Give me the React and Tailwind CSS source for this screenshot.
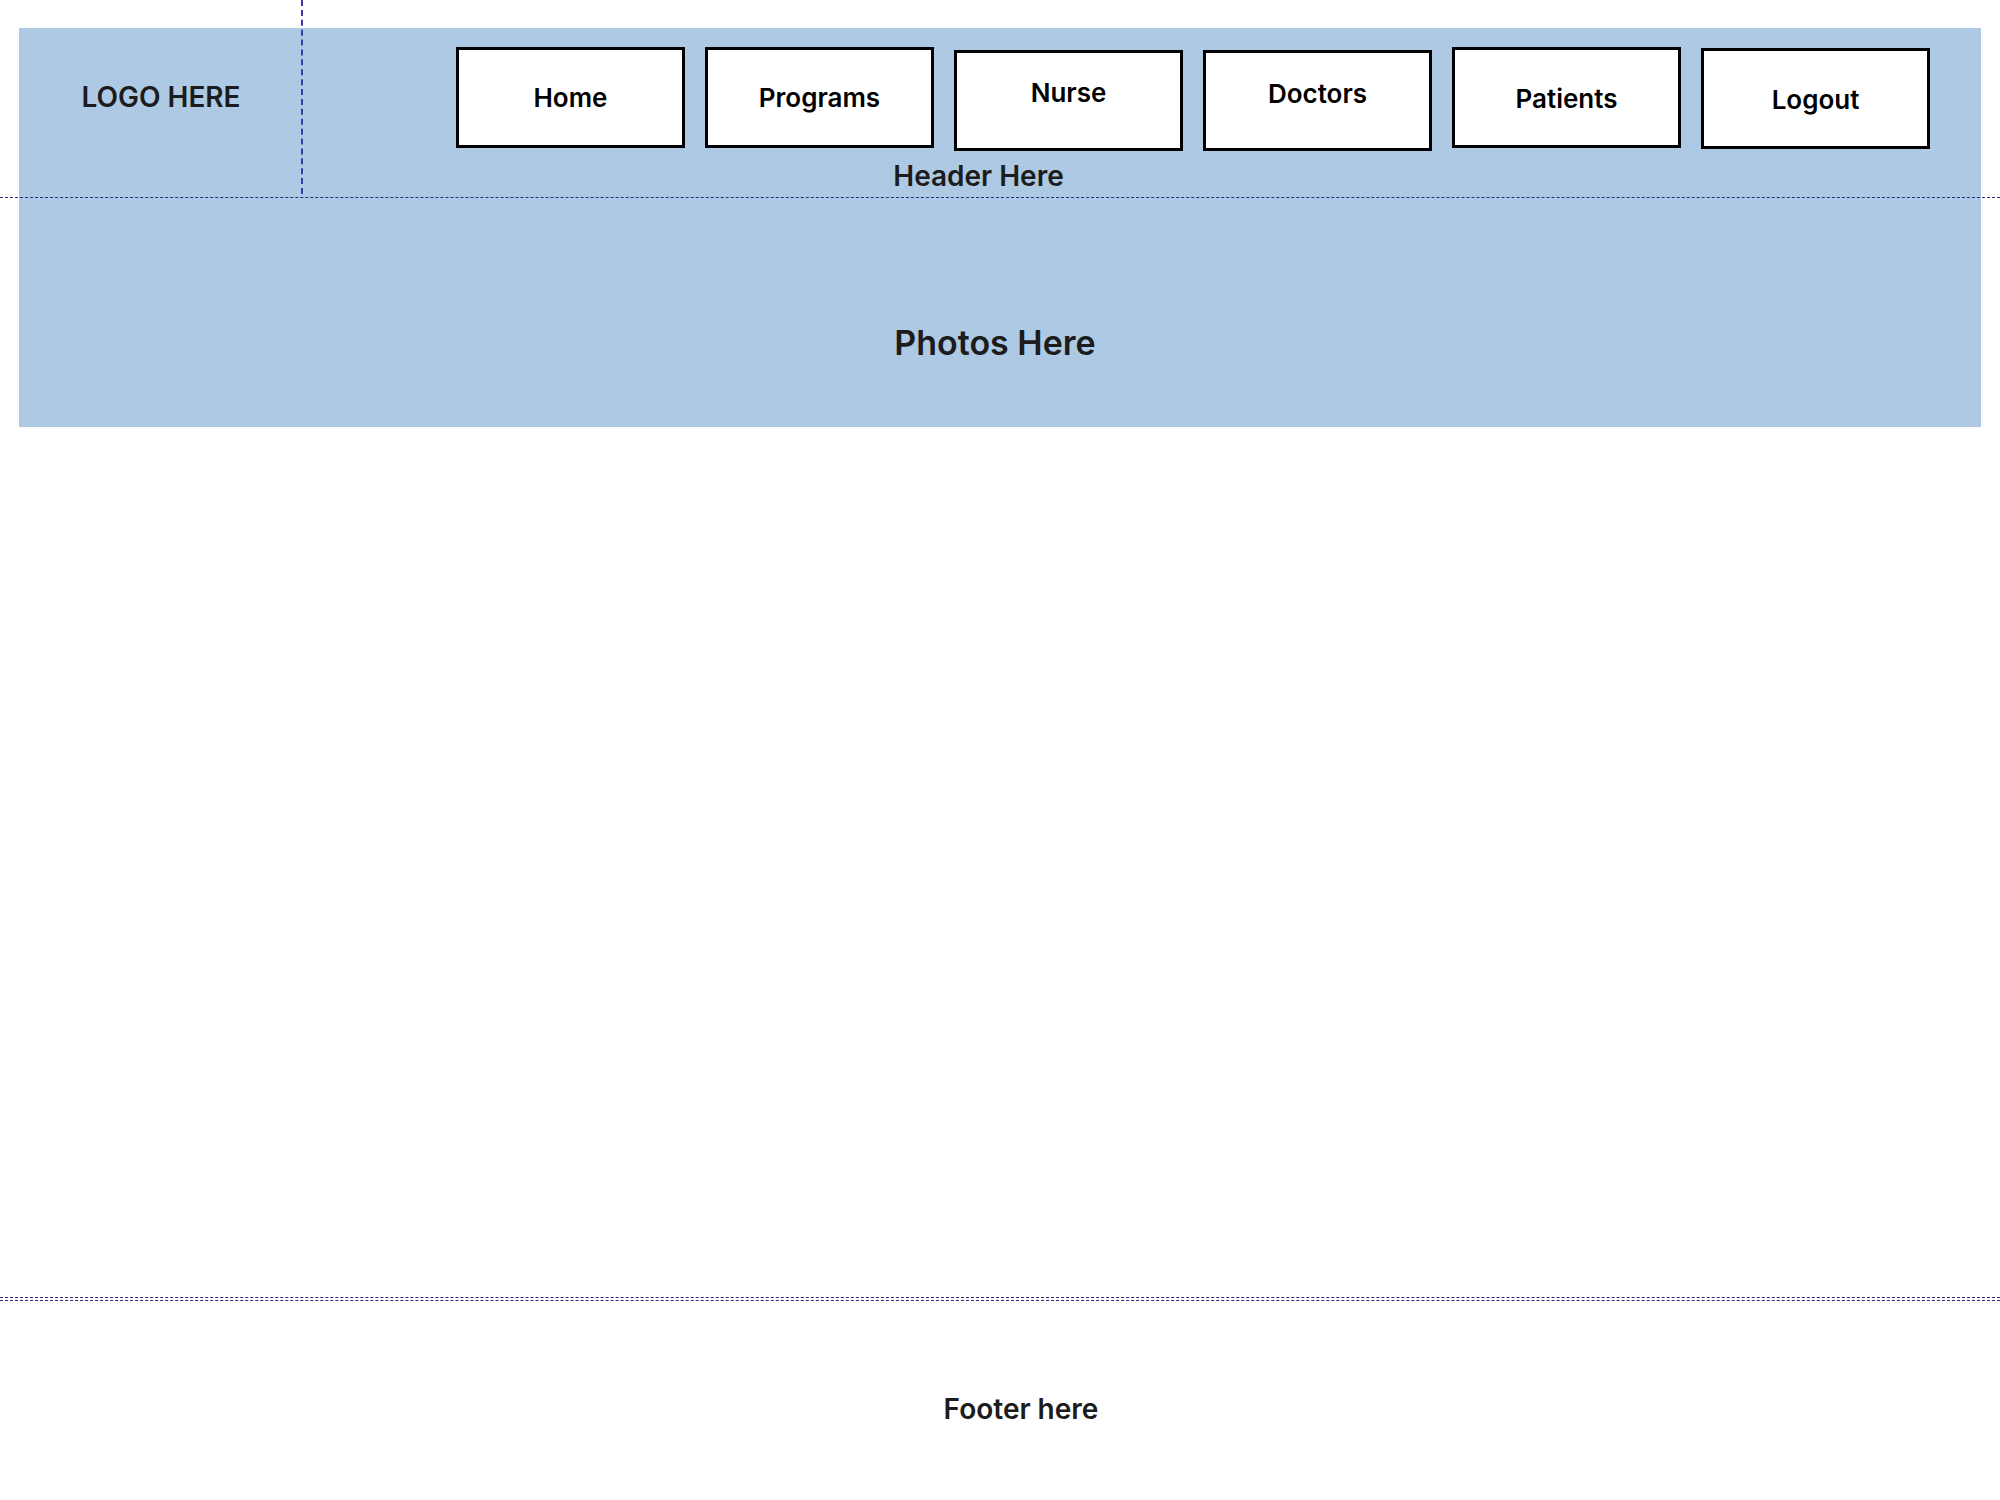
import React from 'react';

const navItems = [
  { label: 'Home', box: 'mt-[19px]', text: '' },
  { label: 'Programs', box: 'mt-[19px]', text: '' },
  { label: 'Nurse', box: 'mt-[22px]', text: 'pb-[16px]' },
  { label: 'Doctors', box: 'mt-[22px]', text: 'pb-[14px]' },
  { label: 'Patients', box: 'mt-[19px]', text: 'pt-[1px]' },
  { label: 'Logout', box: 'mt-[20px]', text: 'pt-[2px]' },
];

const App = () => {
  return (
    <div
      className="relative min-h-[1500px] w-full bg-white text-[#1c1c1c]"
      style={{ fontFamily: 'Inter, "Noto Sans", sans-serif' }}
    >
      {/* guide lines */}
      <div className="absolute left-[301px] top-0 h-[194px] border-l-2 border-dashed border-[#3a3aa8]" />
      <div className="absolute left-0 top-[197px] w-full border-t border-dashed border-[#2a2a7a]" />

      <div className="pt-[28px] px-[19px]">
        <header className="flex h-[170px] bg-[#aec9e3]">
          <div className="flex w-[282px] justify-center pt-[55px] pl-[2px]">
            <span className="text-[28px] font-semibold leading-none">LOGO HERE</span>
          </div>
          <div className="flex flex-1 flex-col">
            <nav className="flex justify-end gap-[20px] pr-[51px]">
              {navItems.map((item) => (
                <button
                  key={item.label}
                  className={`flex h-[101px] w-[229px] items-center justify-center border-[3px] border-black bg-white ${item.box}`}
                >
                  <span className={`text-[26px] font-semibold text-black ${item.text}`}>{item.label}</span>
                </button>
              ))}
            </nav>
            <div className="flex flex-1 items-end justify-center pb-[8px] pr-[325px]">
              <span className="text-[28px] font-semibold leading-none">Header Here</span>
            </div>
          </div>
        </header>

        <section className="flex h-[229px] items-start justify-center bg-[#aec9e3] pt-[128px] pr-[10px]">
          <h1 className="text-[34px] font-semibold leading-none">Photos Here</h1>
        </section>
      </div>

      <div className="mt-[870px] border-t border-dashed border-[#2a2a7a]" />
      <div className="mt-[2px] border-t border-dashed border-[#2a2a7a]" />

      <footer className="flex justify-center pt-[94px] pl-[42px]">
        <span className="text-[28px] font-semibold leading-none">Footer here</span>
      </footer>
    </div>
  );
};

export default App;
